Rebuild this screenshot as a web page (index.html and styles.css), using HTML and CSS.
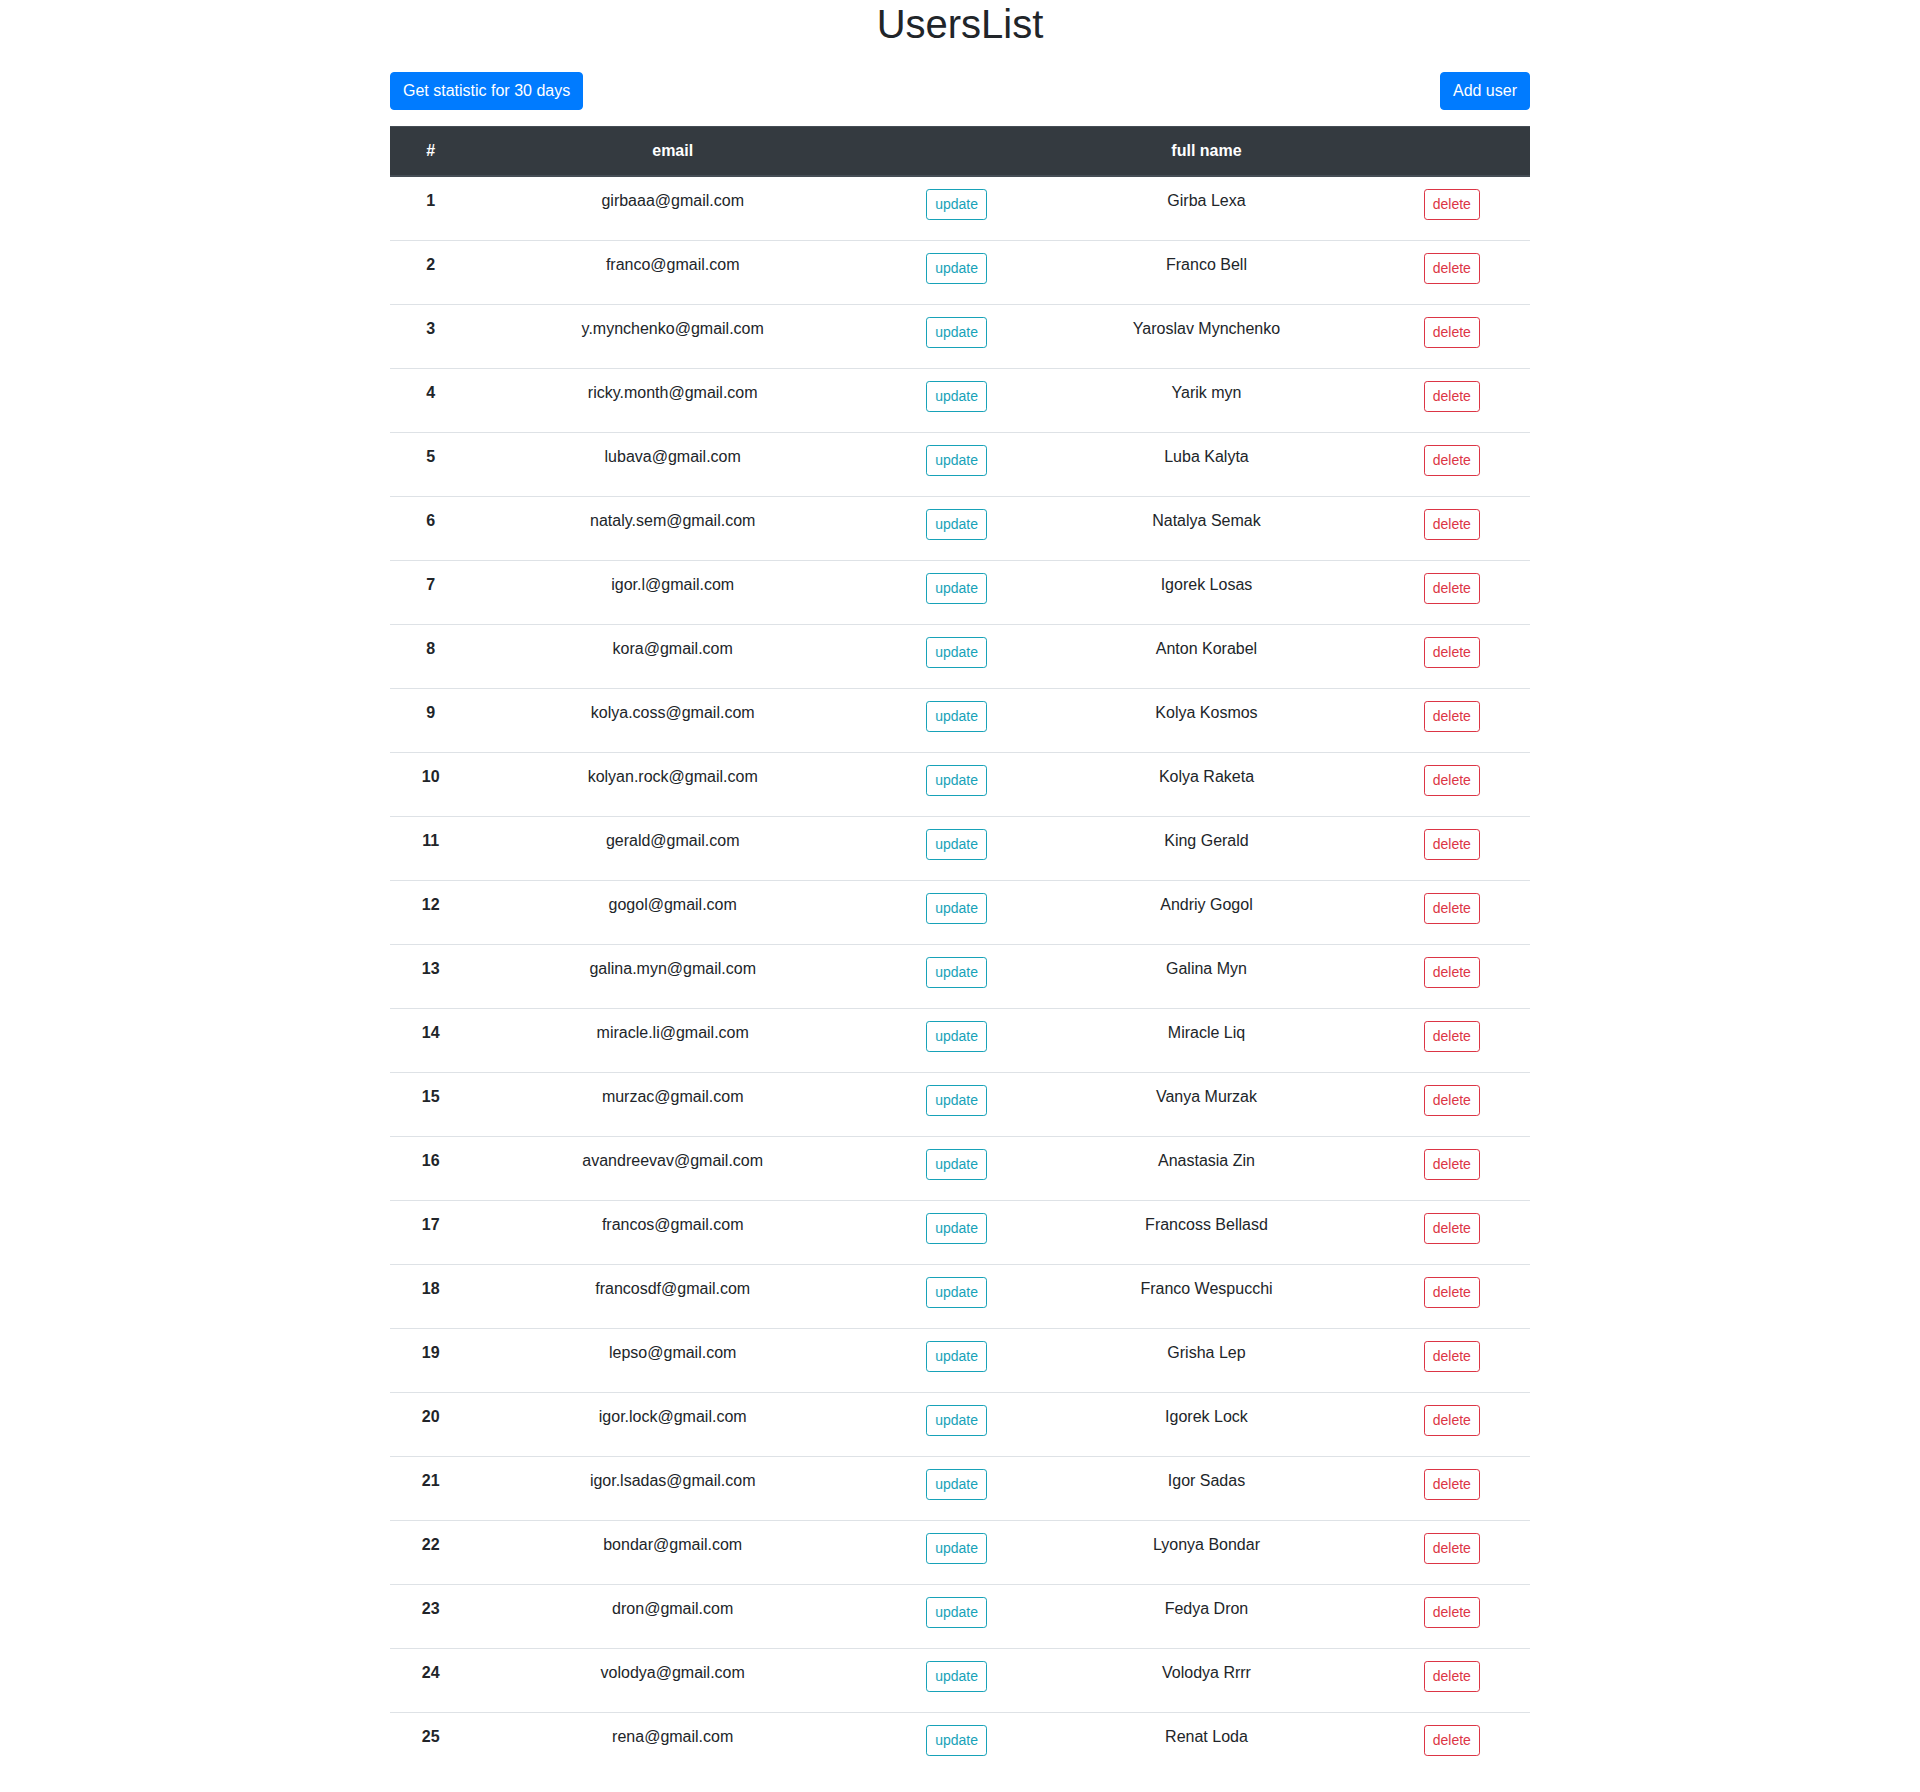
FILE: index.html
```html
<!DOCTYPE html>
<html lang="en">
<head>
<meta charset="utf-8">
<title>UsersList</title>
<link rel="stylesheet" href="styles.css">
</head>
<body>
<div class="container">
  <h1 class="title">UsersList</h1>
  <div class="toolbar">
    <button class="btn btn-primary">Get statistic for 30 days</button>
    <button class="btn btn-primary">Add user</button>
  </div>
  <table class="users">
    <thead>
      <tr><th>#</th><th>email</th><th></th><th>full name</th><th></th></tr>
    </thead>
    <tbody>
      <tr><th>1</th><td>girbaaa@gmail.com</td><td class="action"><button class="btn-sm btn-info">update</button></td><td>Girba Lexa</td><td class="action"><button class="btn-sm btn-danger">delete</button></td></tr>
      <tr><th>2</th><td>franco@gmail.com</td><td class="action"><button class="btn-sm btn-info">update</button></td><td>Franco Bell</td><td class="action"><button class="btn-sm btn-danger">delete</button></td></tr>
      <tr><th>3</th><td>y.mynchenko@gmail.com</td><td class="action"><button class="btn-sm btn-info">update</button></td><td>Yaroslav Mynchenko</td><td class="action"><button class="btn-sm btn-danger">delete</button></td></tr>
      <tr><th>4</th><td>ricky.month@gmail.com</td><td class="action"><button class="btn-sm btn-info">update</button></td><td>Yarik myn</td><td class="action"><button class="btn-sm btn-danger">delete</button></td></tr>
      <tr><th>5</th><td>lubava@gmail.com</td><td class="action"><button class="btn-sm btn-info">update</button></td><td>Luba Kalyta</td><td class="action"><button class="btn-sm btn-danger">delete</button></td></tr>
      <tr><th>6</th><td>nataly.sem@gmail.com</td><td class="action"><button class="btn-sm btn-info">update</button></td><td>Natalya Semak</td><td class="action"><button class="btn-sm btn-danger">delete</button></td></tr>
      <tr><th>7</th><td>igor.l@gmail.com</td><td class="action"><button class="btn-sm btn-info">update</button></td><td>Igorek Losas</td><td class="action"><button class="btn-sm btn-danger">delete</button></td></tr>
      <tr><th>8</th><td>kora@gmail.com</td><td class="action"><button class="btn-sm btn-info">update</button></td><td>Anton Korabel</td><td class="action"><button class="btn-sm btn-danger">delete</button></td></tr>
      <tr><th>9</th><td>kolya.coss@gmail.com</td><td class="action"><button class="btn-sm btn-info">update</button></td><td>Kolya Kosmos</td><td class="action"><button class="btn-sm btn-danger">delete</button></td></tr>
      <tr><th>10</th><td>kolyan.rock@gmail.com</td><td class="action"><button class="btn-sm btn-info">update</button></td><td>Kolya Raketa</td><td class="action"><button class="btn-sm btn-danger">delete</button></td></tr>
      <tr><th>11</th><td>gerald@gmail.com</td><td class="action"><button class="btn-sm btn-info">update</button></td><td>King Gerald</td><td class="action"><button class="btn-sm btn-danger">delete</button></td></tr>
      <tr><th>12</th><td>gogol@gmail.com</td><td class="action"><button class="btn-sm btn-info">update</button></td><td>Andriy Gogol</td><td class="action"><button class="btn-sm btn-danger">delete</button></td></tr>
      <tr><th>13</th><td>galina.myn@gmail.com</td><td class="action"><button class="btn-sm btn-info">update</button></td><td>Galina Myn</td><td class="action"><button class="btn-sm btn-danger">delete</button></td></tr>
      <tr><th>14</th><td>miracle.li@gmail.com</td><td class="action"><button class="btn-sm btn-info">update</button></td><td>Miracle Liq</td><td class="action"><button class="btn-sm btn-danger">delete</button></td></tr>
      <tr><th>15</th><td>murzac@gmail.com</td><td class="action"><button class="btn-sm btn-info">update</button></td><td>Vanya Murzak</td><td class="action"><button class="btn-sm btn-danger">delete</button></td></tr>
      <tr><th>16</th><td>avandreevav@gmail.com</td><td class="action"><button class="btn-sm btn-info">update</button></td><td>Anastasia Zin</td><td class="action"><button class="btn-sm btn-danger">delete</button></td></tr>
      <tr><th>17</th><td>francos@gmail.com</td><td class="action"><button class="btn-sm btn-info">update</button></td><td>Francoss Bellasd</td><td class="action"><button class="btn-sm btn-danger">delete</button></td></tr>
      <tr><th>18</th><td>francosdf@gmail.com</td><td class="action"><button class="btn-sm btn-info">update</button></td><td>Franco Wespucchi</td><td class="action"><button class="btn-sm btn-danger">delete</button></td></tr>
      <tr><th>19</th><td>lepso@gmail.com</td><td class="action"><button class="btn-sm btn-info">update</button></td><td>Grisha Lep</td><td class="action"><button class="btn-sm btn-danger">delete</button></td></tr>
      <tr><th>20</th><td>igor.lock@gmail.com</td><td class="action"><button class="btn-sm btn-info">update</button></td><td>Igorek Lock</td><td class="action"><button class="btn-sm btn-danger">delete</button></td></tr>
      <tr><th>21</th><td>igor.lsadas@gmail.com</td><td class="action"><button class="btn-sm btn-info">update</button></td><td>Igor Sadas</td><td class="action"><button class="btn-sm btn-danger">delete</button></td></tr>
      <tr><th>22</th><td>bondar@gmail.com</td><td class="action"><button class="btn-sm btn-info">update</button></td><td>Lyonya Bondar</td><td class="action"><button class="btn-sm btn-danger">delete</button></td></tr>
      <tr><th>23</th><td>dron@gmail.com</td><td class="action"><button class="btn-sm btn-info">update</button></td><td>Fedya Dron</td><td class="action"><button class="btn-sm btn-danger">delete</button></td></tr>
      <tr><th>24</th><td>volodya@gmail.com</td><td class="action"><button class="btn-sm btn-info">update</button></td><td>Volodya Rrrr</td><td class="action"><button class="btn-sm btn-danger">delete</button></td></tr>
      <tr><th>25</th><td>rena@gmail.com</td><td class="action"><button class="btn-sm btn-info">update</button></td><td>Renat Loda</td><td class="action"><button class="btn-sm btn-danger">delete</button></td></tr>
    </tbody>
  </table>
</div>
</body>
</html>
```
FILE: styles.css
```css
* { box-sizing: border-box; }
html, body { margin: 0; padding: 0; }
body {
  font-family: "Liberation Sans", Arial, sans-serif;
  font-size: 16px;
  line-height: 1.5;
  color: #212529;
  background: #fff;
}
.container {
  width: 1140px;
  margin: 0 auto;
}
.title {
  margin: 0;
  font-size: 40px;
  font-weight: 500;
  line-height: 1.2;
  text-align: center;
}
.toolbar {
  display: flex;
  justify-content: space-between;
  margin: 24px 0 16px;
}
.btn {
  font-family: inherit;
  font-size: 16px;
  line-height: 1.5;
  padding: 6px 12px;
  border: 1px solid transparent;
  border-radius: 4px;
  cursor: pointer;
}
.btn-primary {
  background: #007bff;
  border-color: #007bff;
  color: #fff;
}
.users {
  width: 100%;
  border-collapse: collapse;
  margin-bottom: 16px;
  text-align: center;
}
.users th, .users td {
  padding: 12px;
  vertical-align: top;
  border-top: 1px solid #dee2e6;
  text-align: center;
}
.users thead th {
  background: #343a40;
  color: #fff;
  border-top: 1px solid #454d55;
  border-bottom: 2px solid #454d55;
  vertical-align: bottom;
  font-weight: bold;
}
.users tbody th { font-weight: bold; }
.users td.action { padding-bottom: 20px; }
.btn-sm {
  display: inline-block;
  vertical-align: top;
  font-family: inherit;
  font-size: 14px;
  line-height: 1.5;
  padding: 4px 8px;
  border: 1px solid;
  border-radius: 3.2px;
  background: transparent;
  cursor: pointer;
}
.btn-info { color: #17a2b8; border-color: #17a2b8; }
.btn-danger { color: #dc3545; border-color: #dc3545; }
```
